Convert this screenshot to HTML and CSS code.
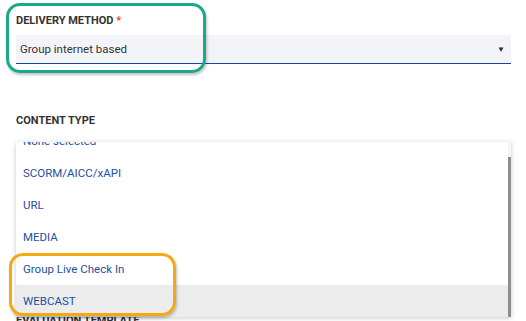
FILE: index.html
```html
<!DOCTYPE html>
<html lang="en">
<head>
  <meta charset="UTF-8" />
  <meta name="viewport" content="width=device-width, initial-scale=1.0"/>
  <title>Course Settings</title>
  <link rel="stylesheet" href="styles.css">
</head>
<body>
  <div class="form">
    <div class="field">
      <label class="field-label">Delivery Method <span class="req">*</span></label>
      <div class="select">
        <span>Group internet based</span>
        <span class="arrow">&#9660;</span>
      </div>
    </div>

    <div class="field field-type">
      <label class="field-label">Content Type</label>
      <div class="menu">
        <ul class="menu-list">
          <li>None selected</li>
          <li>SCORM/AICC/xAPI</li>
          <li>URL</li>
          <li>MEDIA</li>
          <li>Group Live Check In</li>
          <li class="active">WEBCAST</li>
        </ul>
        <div class="scrollbar"><div class="thumb"></div></div>
      </div>
    </div>

    <label class="field-label next-label">Evaluation Template</label>

    <div class="mark mark-green"></div>
    <div class="mark mark-orange"></div>
  </div>
</body>
</html>
```

FILE: styles.css
```css
body { margin: 0; font-family: Roboto, "Liberation Sans", sans-serif; background: #fff; overflow: hidden; }
.form { position: relative; padding: 14px 15px 0 16px; }

.field-label {
  display: block; font-size: 11px; line-height: 13px; font-weight: 700;
  color: #333; text-transform: uppercase;
}
.req { color: #e0462e; }

.select {
  margin-top: 8px; height: 28px; background: #f3f4f8;
  border-bottom: 1px solid #1447a3;
  display: flex; align-items: center; justify-content: space-between;
  padding: 0 6px 0 4px; font-size: 11.5px; color: #333;
}
.arrow { font-size: 8px; color: #2b2f36; }

.field-type { margin-top: 50px; }
.menu {
  position: relative; z-index: 1;
  margin-top: 15px; height: 175px; display: flex; background: #fff;
  box-shadow: 0 1px 5px rgba(0, 0, 0, 0.22);
}
.menu-list {
  flex: 1; list-style: none; margin: 0; padding: 0; overflow: hidden;
}
.menu-list li {
  height: 32px; line-height: 32px; padding-left: 7px;
  font-size: 11.5px; color: #1f4fa3;
}
.menu-list li:first-child { margin-top: -17px; }
.menu-list li.active { background: #ececec; }

.scrollbar { width: 3px; padding-top: 15px; background: #f4f4f4; }
.thumb { height: 100%; background: #8e8e8e; }

.next-label { margin-top: -3px; }

.mark {
  position: absolute; z-index: 2; border-radius: 14px;
  box-shadow: 1px 2px 3px rgba(0, 0, 0, 0.25);
}
.mark-green { left: 6px; top: 3px; width: 194px; height: 64px; border: 3px solid #19a98a; }
.mark-orange { left: 9px; top: 253px; width: 161px; height: 57px; border: 3px solid #f4a814; }
```
